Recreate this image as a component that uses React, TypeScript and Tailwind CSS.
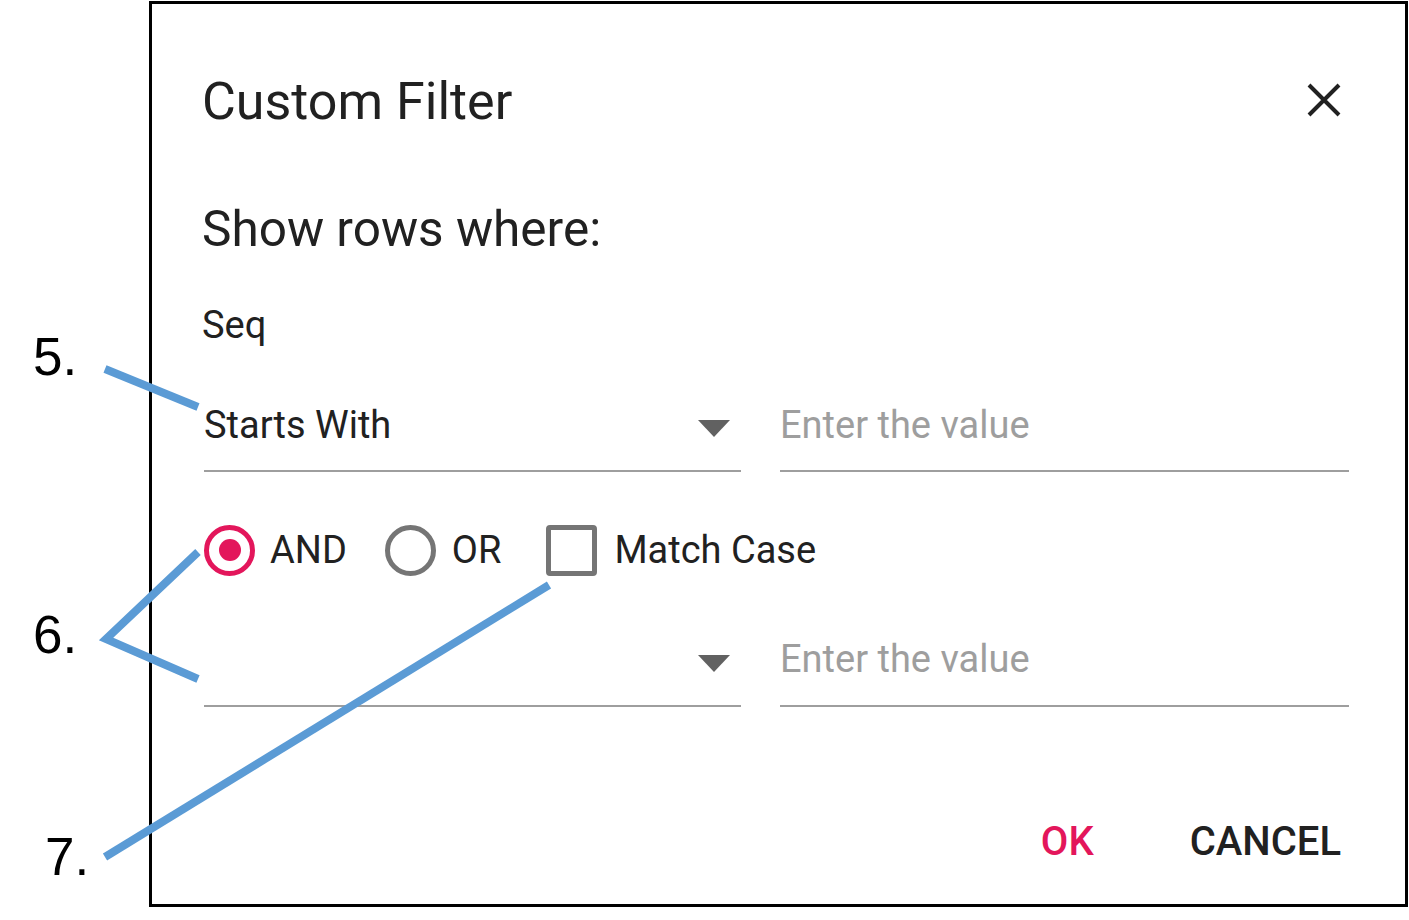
import React, { useState } from 'react';

const PINK = '#e3165b';

const Caret = () => (
  <svg width="32" height="17" viewBox="0 0 32 17" className="shrink-0">
    <path d="M0 0 L32 0 L16 17 Z" fill="#616161" />
  </svg>
);

const App: React.FC = () => {
  const [mode, setMode] = useState<'and' | 'or'>('and');
  const [matchCase, setMatchCase] = useState(false);

  return (
    <div
      className="relative w-[1409px] h-[920px] bg-white flex overflow-hidden"
      style={{ fontFamily: 'Roboto, "Noto Sans", sans-serif' }}
    >
      {/* annotation numbers */}
      <div
        className="w-[149px] shrink-0 text-black text-[53px] leading-[60px]"
        style={{ fontFamily: '"Liberation Sans", Arial, sans-serif' }}
      >
        <div className="mt-[327px] pl-[33px]">5.</div>
        <div className="mt-[218px] pl-[33px]">6.</div>
        <div className="mt-[162px] pl-[45px]">7.</div>
      </div>

      {/* dialog */}
      <div className="mt-px w-[1259px] h-[906px] border-[3px] border-black bg-white flex flex-col pl-[50px] pr-[56px] pt-[68px]">
        {/* header */}
        <div className="flex items-center justify-between h-[60px]">
          <h1 className="text-[52px] leading-[60px] font-normal text-[#212121]">Custom Filter</h1>
          <button className="mr-[8px] mt-[-4px]">
            <svg width="34" height="34" viewBox="0 0 34 34">
              <path d="M2 2 L32 32 M32 2 L2 32" stroke="#212121" strokeWidth="4" />
            </svg>
          </button>
        </div>

        <div className="mt-[69px] text-[49.5px] leading-[56px] text-[#212121]">Show rows where:</div>

        <div className="mt-[45px] text-[38px] leading-[46px] text-[#212121]">Seq</div>

        {/* first condition */}
        <div className="mt-[54px] flex gap-[39px] pl-[2px]">
          <div className="w-[537px] flex items-center justify-between border-b-2 border-[#9e9e9e] pb-[22px]">
            <span className="text-[38px] leading-[46px] text-[#212121]">Starts With</span>
            <span className="mr-[11px] mt-[6px]"><Caret /></span>
          </div>
          <div className="w-[569px] border-b-2 border-[#9e9e9e] pb-[22px]">
            <span className="text-[38px] leading-[46px] text-[#9e9e9e]">Enter the value</span>
          </div>
        </div>

        {/* predicate row */}
        <div className="mt-[52px] flex items-center h-[52px] pl-[2px] text-[38px] text-[#212121]">
          <button className="flex items-center" onClick={() => setMode('and')}>
            <span
              className="w-[51px] h-[51px] rounded-full border-[5px] flex items-center justify-center"
              style={{ borderColor: mode === 'and' ? PINK : '#757575' }}
            >
              {mode === 'and' && <span className="w-[22px] h-[22px] rounded-full bg-[#e3165b]" />}
            </span>
            <span className="ml-[15px]">AND</span>
          </button>
          <button className="flex items-center ml-[38px]" onClick={() => setMode('or')}>
            <span
              className="w-[51px] h-[51px] rounded-full border-[5px] flex items-center justify-center"
              style={{ borderColor: mode === 'or' ? PINK : '#757575' }}
            >
              {mode === 'or' && <span className="w-[22px] h-[22px] rounded-full bg-[#e3165b]" />}
            </span>
            <span className="ml-[16px]">OR</span>
          </button>
          <button className="flex items-center ml-[45px]" onClick={() => setMatchCase(!matchCase)}>
            <span
              className="w-[51px] h-[51px] rounded-[4px] border-[5px] border-[#757575]"
              style={{ background: matchCase ? PINK : 'transparent' }}
            />
            <span className="ml-[17px]">Match Case</span>
          </button>
        </div>

        {/* second condition */}
        <div className="mt-[60px] flex gap-[39px] pl-[2px]">
          <div className="w-[537px] flex items-center justify-end border-b-2 border-[#9e9e9e] pb-[23px] h-[71px]">
            <span className="mr-[11px] mt-[8px]"><Caret /></span>
          </div>
          <div className="w-[569px] border-b-2 border-[#9e9e9e] pb-[23px]">
            <span className="text-[38px] leading-[46px] text-[#9e9e9e]">Enter the value</span>
          </div>
        </div>

        {/* footer */}
        <div className="mt-[111px] flex justify-end gap-[96px] pr-[8px] text-[40px] leading-[48px] font-medium">
          <button className="text-[#e3165b]">OK</button>
          <button className="text-[#212121]">CANCEL</button>
        </div>
      </div>

      {/* annotation lines */}
      <svg className="absolute inset-0 pointer-events-none" width="1409" height="920">
        <g stroke="#5b9bd5" strokeWidth="8" fill="none">
          <path d="M105 369 L198 407" />
          <path d="M198 552 L106 639 L198 679" />
          <path d="M105 857 L549 585" />
        </g>
      </svg>
    </div>
  );
};

export default App;
